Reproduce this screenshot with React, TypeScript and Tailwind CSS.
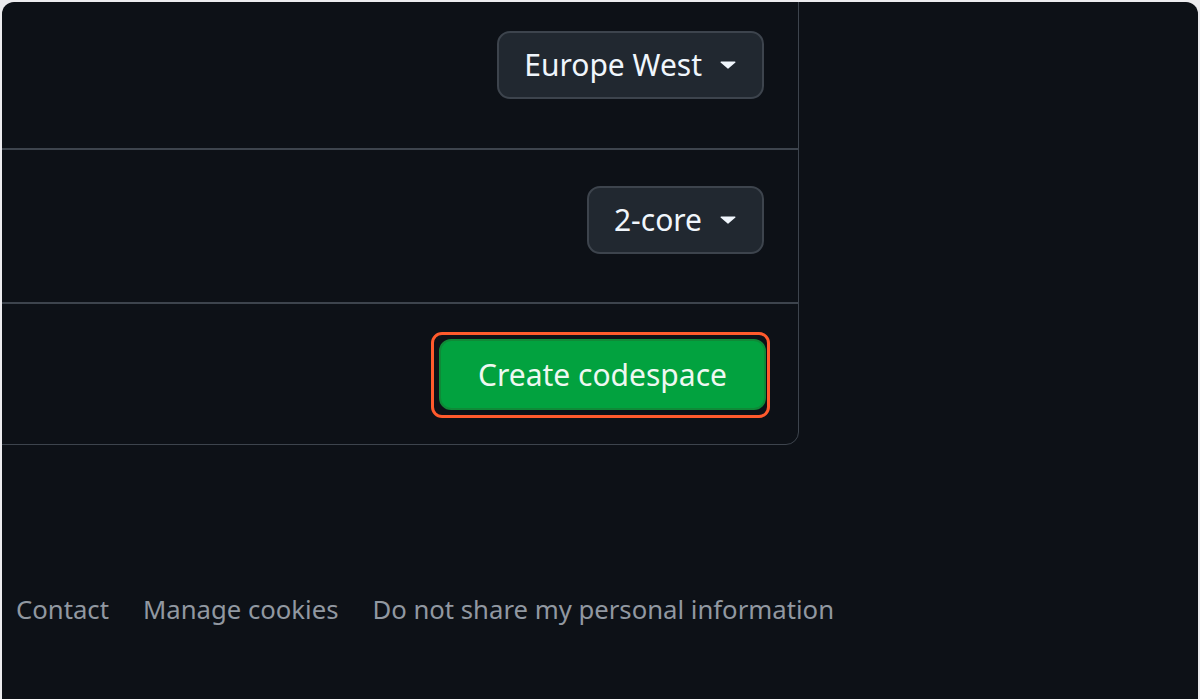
import type { ReactNode } from 'react'

function Caret() {
  return (
    <svg width="16" height="8" viewBox="0 0 16 8" fill="currentColor" className="ml-[18px]">
      <path d="M1 0.5h14a0.6 0.6 0 0 1 0.4 1L8.4 7.6a0.6 0.6 0 0 1-0.8 0L0.6 1.5A0.6 0.6 0 0 1 1 0.5Z" />
    </svg>
  )
}

function SelectButton({ children }: { children: ReactNode }) {
  return (
    <button className="flex h-[68px] items-center rounded-[13px] border-2 border-[#3d444d] bg-[#212830] pl-[25px] pr-[26px] text-[30px] text-[#f0f6fc]">
      <span className="leading-none">{children}</span>
      <Caret />
    </button>
  )
}

export default function App() {
  return (
    <div
      className="h-[699px] w-[1200px] overflow-hidden bg-[#ececef] px-[2px] pt-[2px]"
      style={{ fontFamily: '"Noto Sans", "Open Sans", sans-serif' }}
    >
      <div className="h-[720px] overflow-hidden rounded-[12px] bg-[#0d1117]">
        <div className="-mt-[21px] ml-[-20px] w-[817px] rounded-[13px] border border-[#3d444d]">
          <div className="flex h-[168px] items-start justify-end border-b-2 border-[#3d444d] pr-[34px] pt-[49px]">
            <SelectButton>Europe West</SelectButton>
          </div>
          <div className="flex h-[154px] items-start justify-end border-b-2 border-[#3d444d] pr-[34px] pt-[36px]">
            <SelectButton>2-core</SelectButton>
          </div>
          <div className="flex h-[140px] items-start justify-end pr-[32px] pt-[35px]">
            <div className="relative">
              <div className="pointer-events-none absolute -bottom-[8px] -left-[8px] -right-[4px] -top-[7px] rounded-[11px] border-[3px] border-[#ff5a2c]" />
              <button className="flex h-[71px] w-[327px] items-center justify-center rounded-[12px] border-2 border-[#0f8a37] bg-[#02a23f] text-[30px] text-[#eef8f1]">
                Create codespace
              </button>
            </div>
          </div>
        </div>

        <div className="mt-[147px] flex gap-[34px] pl-[14px] text-[25.7px] leading-[36px] text-[#9198a1]">
          <span>Contact</span>
          <span>Manage cookies</span>
          <span>Do not share my personal information</span>
        </div>
      </div>
    </div>
  )
}
